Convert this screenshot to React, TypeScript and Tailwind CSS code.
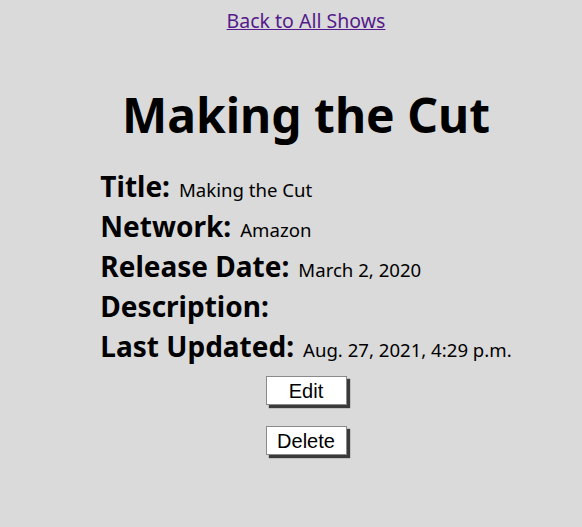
const rows: [string, string][] = [
  ['Title:', 'Making the Cut'],
  ['Network:', 'Amazon'],
  ['Release Date:', 'March 2, 2020'],
  ['Description:', ''],
  ['Last Updated:', 'Aug. 27, 2021, 4:29 p.m.'],
];

export default function App() {
  return (
    <div className="min-h-screen bg-[#dadada] text-black font-['Noto_Sans',sans-serif] pl-[30px] pt-[6px]">
      <div className="text-center">
        <a href="#" className="text-[19.5px] text-[#551a8b] underline">
          Back to All Shows
        </a>
      </div>

      <h1 className="text-center text-[48px] font-bold mt-[48px] leading-[64px]">Making the Cut</h1>

      <div className="text-center mt-[24px]">
        <div className="inline-block text-left">
          {rows.map(([label, value]) => (
            <div key={label} className="h-[40px] leading-[40px] whitespace-nowrap">
              <span className="text-[28px] font-bold leading-none">{label}</span>
              <span className="text-[18.6px] leading-none ml-[9px]">{value}</span>
            </div>
          ))}
        </div>
      </div>

      <div className="flex flex-col items-center gap-[21px] mt-[5px]">
        <button className="w-[81px] h-[29px] bg-white border border-[#8a8a8a] shadow-[3px_3px_1px_#3a3a3a] font-['Liberation_Sans',sans-serif] text-[20px] leading-none pt-[1px]">
          Edit
        </button>
        <button className="w-[81px] h-[29px] bg-white border border-[#8a8a8a] shadow-[3px_3px_1px_#3a3a3a] font-['Liberation_Sans',sans-serif] text-[20px] leading-none pt-[1px]">
          Delete
        </button>
      </div>
    </div>
  );
}
